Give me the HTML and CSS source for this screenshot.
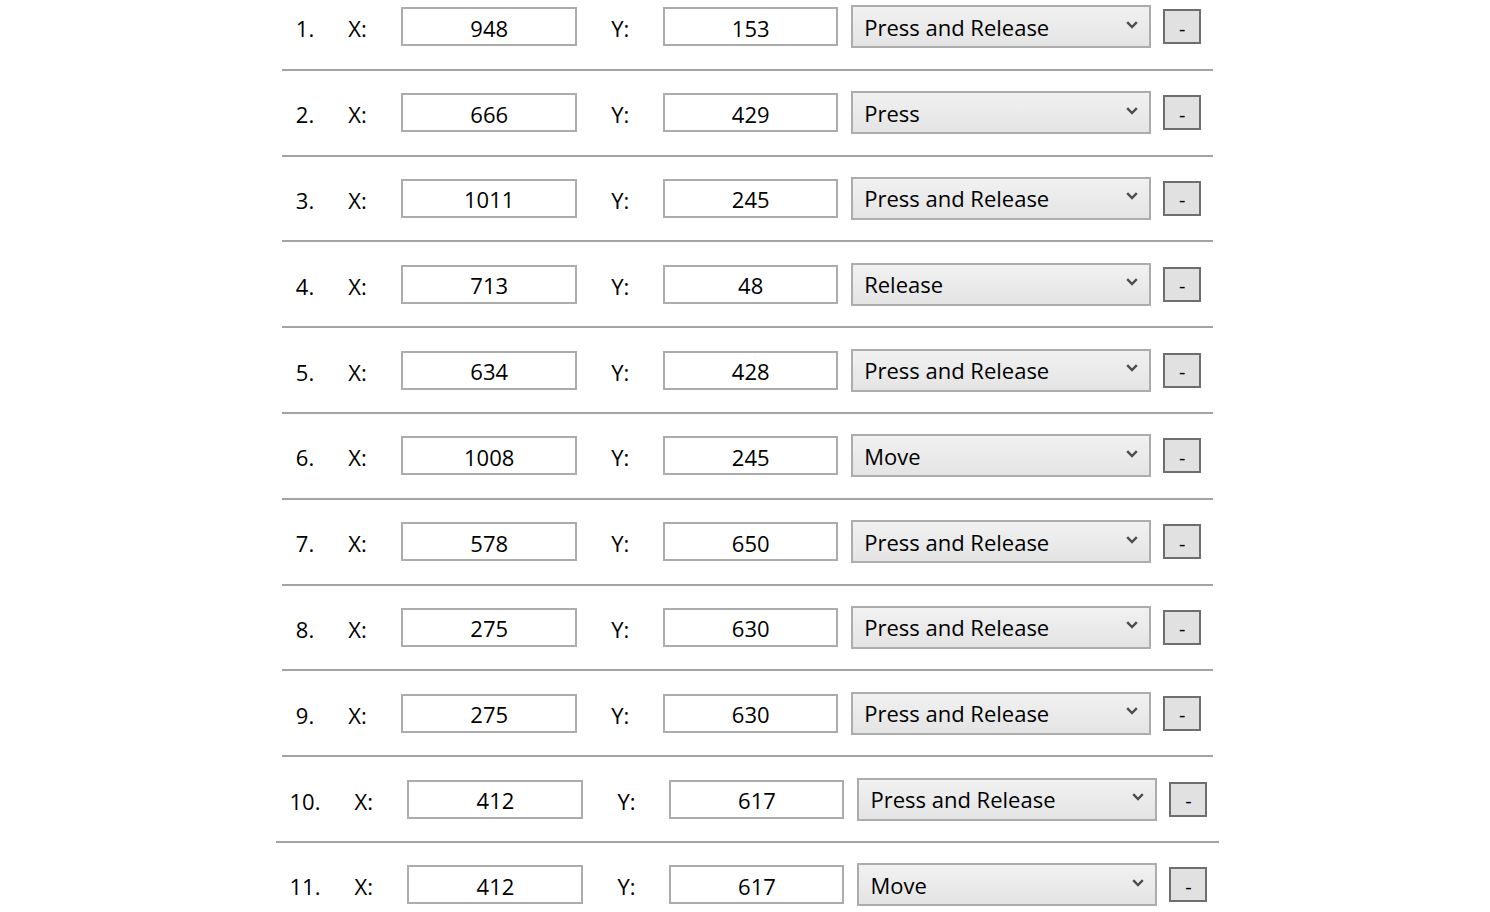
FILE: index.html
```html
<!DOCTYPE html>
<html lang="en">
<head>
<meta charset="utf-8">
<title>Click points</title>
<link rel="stylesheet" href="styles.css">
</head>
<body>
<div class="list">
  <div class="row"><span class="num">1.</span><span class="lbl">X:</span><input class="field" type="text" value="948" readonly><span class="lbl lbl-y">Y:</span><input class="field field-y" type="text" value="153" readonly><div class="select"><span>Press and Release</span><svg class="chev" width="12" height="8" viewBox="0 0 12 8"><path d="M1.2 1.2 L6 6 L10.8 1.2" fill="none" stroke="#4d4d4d" stroke-width="2.4"/></svg></div><button class="btn" type="button">-</button></div>
  <div class="row"><span class="num">2.</span><span class="lbl">X:</span><input class="field" type="text" value="666" readonly><span class="lbl lbl-y">Y:</span><input class="field field-y" type="text" value="429" readonly><div class="select"><span>Press</span><svg class="chev" width="12" height="8" viewBox="0 0 12 8"><path d="M1.2 1.2 L6 6 L10.8 1.2" fill="none" stroke="#4d4d4d" stroke-width="2.4"/></svg></div><button class="btn" type="button">-</button></div>
  <div class="row"><span class="num">3.</span><span class="lbl">X:</span><input class="field" type="text" value="1011" readonly><span class="lbl lbl-y">Y:</span><input class="field field-y" type="text" value="245" readonly><div class="select"><span>Press and Release</span><svg class="chev" width="12" height="8" viewBox="0 0 12 8"><path d="M1.2 1.2 L6 6 L10.8 1.2" fill="none" stroke="#4d4d4d" stroke-width="2.4"/></svg></div><button class="btn" type="button">-</button></div>
  <div class="row"><span class="num">4.</span><span class="lbl">X:</span><input class="field" type="text" value="713" readonly><span class="lbl lbl-y">Y:</span><input class="field field-y" type="text" value="48" readonly><div class="select"><span>Release</span><svg class="chev" width="12" height="8" viewBox="0 0 12 8"><path d="M1.2 1.2 L6 6 L10.8 1.2" fill="none" stroke="#4d4d4d" stroke-width="2.4"/></svg></div><button class="btn" type="button">-</button></div>
  <div class="row"><span class="num">5.</span><span class="lbl">X:</span><input class="field" type="text" value="634" readonly><span class="lbl lbl-y">Y:</span><input class="field field-y" type="text" value="428" readonly><div class="select"><span>Press and Release</span><svg class="chev" width="12" height="8" viewBox="0 0 12 8"><path d="M1.2 1.2 L6 6 L10.8 1.2" fill="none" stroke="#4d4d4d" stroke-width="2.4"/></svg></div><button class="btn" type="button">-</button></div>
  <div class="row"><span class="num">6.</span><span class="lbl">X:</span><input class="field" type="text" value="1008" readonly><span class="lbl lbl-y">Y:</span><input class="field field-y" type="text" value="245" readonly><div class="select"><span>Move</span><svg class="chev" width="12" height="8" viewBox="0 0 12 8"><path d="M1.2 1.2 L6 6 L10.8 1.2" fill="none" stroke="#4d4d4d" stroke-width="2.4"/></svg></div><button class="btn" type="button">-</button></div>
  <div class="row"><span class="num">7.</span><span class="lbl">X:</span><input class="field" type="text" value="578" readonly><span class="lbl lbl-y">Y:</span><input class="field field-y" type="text" value="650" readonly><div class="select"><span>Press and Release</span><svg class="chev" width="12" height="8" viewBox="0 0 12 8"><path d="M1.2 1.2 L6 6 L10.8 1.2" fill="none" stroke="#4d4d4d" stroke-width="2.4"/></svg></div><button class="btn" type="button">-</button></div>
  <div class="row"><span class="num">8.</span><span class="lbl">X:</span><input class="field" type="text" value="275" readonly><span class="lbl lbl-y">Y:</span><input class="field field-y" type="text" value="630" readonly><div class="select"><span>Press and Release</span><svg class="chev" width="12" height="8" viewBox="0 0 12 8"><path d="M1.2 1.2 L6 6 L10.8 1.2" fill="none" stroke="#4d4d4d" stroke-width="2.4"/></svg></div><button class="btn" type="button">-</button></div>
  <div class="row"><span class="num">9.</span><span class="lbl">X:</span><input class="field" type="text" value="275" readonly><span class="lbl lbl-y">Y:</span><input class="field field-y" type="text" value="630" readonly><div class="select"><span>Press and Release</span><svg class="chev" width="12" height="8" viewBox="0 0 12 8"><path d="M1.2 1.2 L6 6 L10.8 1.2" fill="none" stroke="#4d4d4d" stroke-width="2.4"/></svg></div><button class="btn" type="button">-</button></div>
  <div class="row"><span class="num">10.</span><span class="lbl">X:</span><input class="field" type="text" value="412" readonly><span class="lbl lbl-y">Y:</span><input class="field field-y" type="text" value="617" readonly><div class="select"><span>Press and Release</span><svg class="chev" width="12" height="8" viewBox="0 0 12 8"><path d="M1.2 1.2 L6 6 L10.8 1.2" fill="none" stroke="#4d4d4d" stroke-width="2.4"/></svg></div><button class="btn" type="button">-</button></div>
  <div class="row"><span class="num">11.</span><span class="lbl">X:</span><input class="field" type="text" value="412" readonly><span class="lbl lbl-y">Y:</span><input class="field field-y" type="text" value="617" readonly><div class="select"><span>Move</span><svg class="chev" width="12" height="8" viewBox="0 0 12 8"><path d="M1.2 1.2 L6 6 L10.8 1.2" fill="none" stroke="#4d4d4d" stroke-width="2.4"/></svg></div><button class="btn" type="button">-</button></div>
</div>
</body>
</html>
```

FILE: styles.css
```css
html, body {
  margin: 0;
  padding: 0;
  background: #ffffff;
  overflow: hidden;
}

body {
  font-family: "Open Sans", "Noto Sans", sans-serif;
  color: #000000;
}

.list {
  display: flex;
  flex-direction: column;
  align-items: center;
  margin-top: -15px;
  padding-left: 5px;
}

.row {
  display: flex;
  align-items: center;
  box-sizing: border-box;
  height: 85.8px;
  border-bottom: 2px solid #a3a3a3;
  padding: 0 12px 0 14px;
}

.num {
  font-size: 22px;
  margin-right: 34px;
  padding-top: 3px;
}

.lbl {
  width: 53px;
  font-size: 22px;
  padding-top: 3px;
}

.lbl-y {
  width: 52px;
  margin-left: 34px;
}

.field {
  box-sizing: border-box;
  width: 176px;
  height: 39px;
  margin: 0;
  padding: 2px 0 0 0;
  border: 2px solid #acacac;
  border-radius: 0;
  background: #ffffff;
  font-family: "Open Sans", "Noto Sans", sans-serif;
  font-size: 22px;
  color: #000000;
  text-align: center;
  outline: none;
}

.field-y {
  width: 175px;
}

.select {
  box-sizing: border-box;
  width: 300px;
  height: 43px;
  margin-left: 13px;
  border: 2px solid #acacac;
  background: linear-gradient(#f1f1f1, #e4e4e4);
  display: flex;
  align-items: center;
  justify-content: space-between;
  padding: 0 11px 0 11px;
  font-size: 22px;
  color: #000000;
}

.chev {
  display: block;
  margin-top: -4px;
}

.btn {
  box-sizing: border-box;
  width: 38px;
  height: 35px;
  margin-left: 12px;
  padding: 3px 0 0 0;
  border: 2px solid #6e6e6e;
  border-radius: 0;
  background: #e1e1e1;
  font-family: "Open Sans", "Noto Sans", sans-serif;
  font-size: 20px;
  color: #000000;
  display: flex;
  justify-content: center;
  align-items: center;
}
```
